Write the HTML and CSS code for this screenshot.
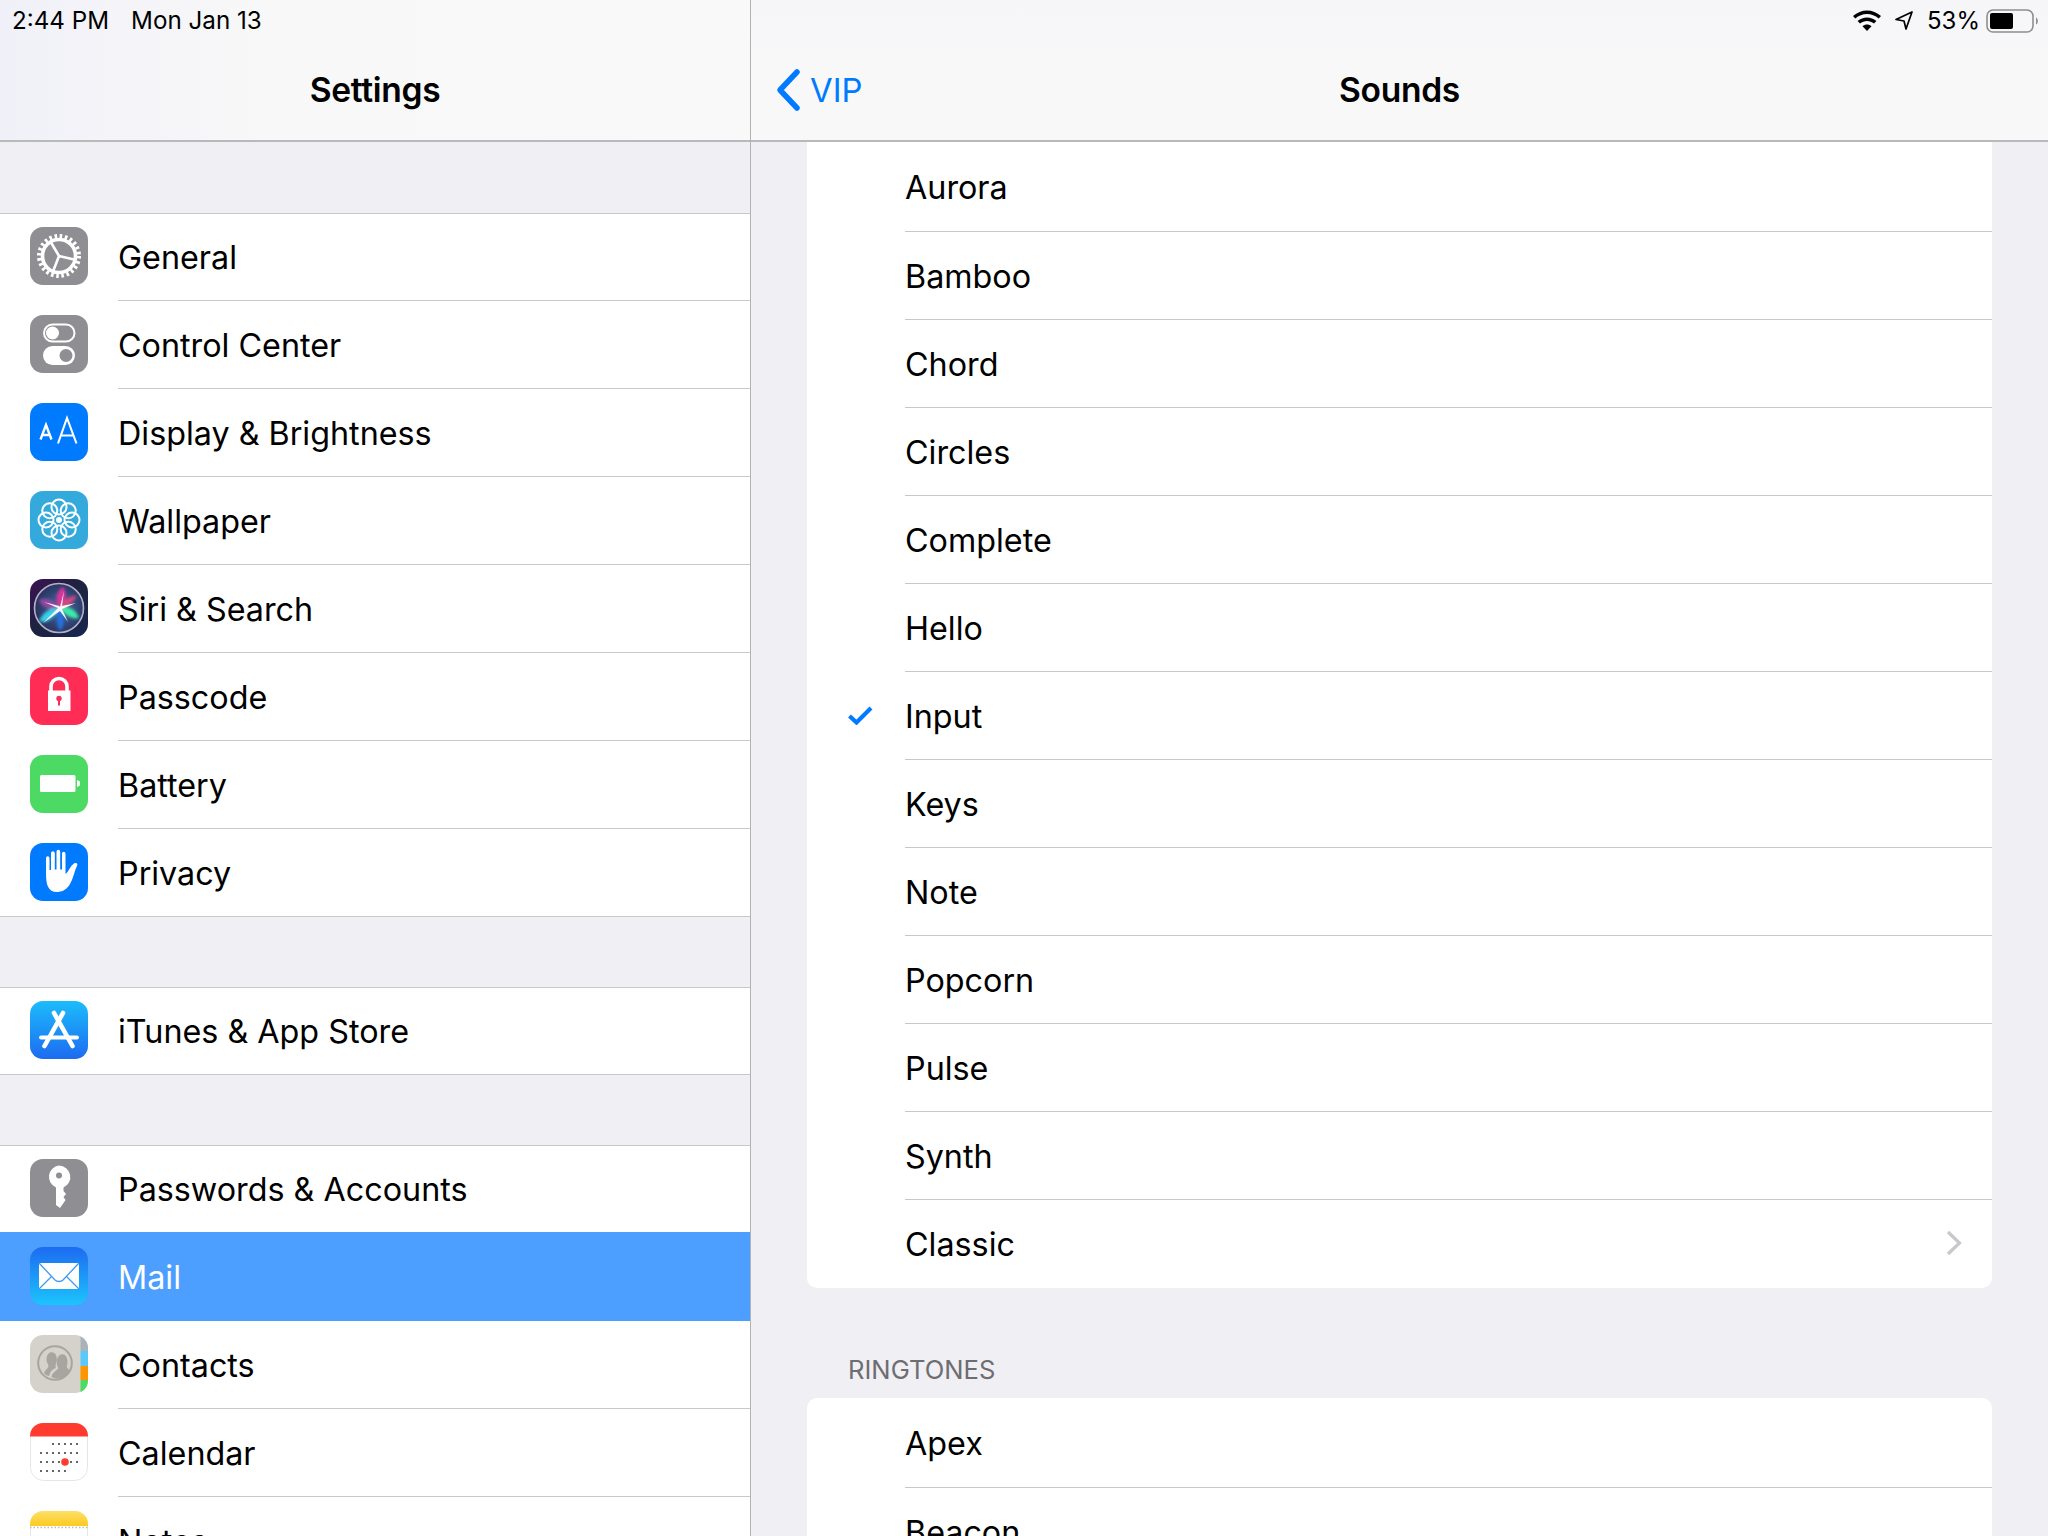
FILE: index.html
```html
<!DOCTYPE html>
<html lang="en">
<head>
<meta charset="utf-8">
<title>Settings</title>
<link rel="stylesheet" href="styles.css">
</head>
<body>
<svg class="defs" width="0" height="0" aria-hidden="true">
  <defs>
    <linearGradient id="gStore" x1="0" y1="0" x2="0" y2="1"><stop offset="0" stop-color="#1cbcfb"/><stop offset="1" stop-color="#1d6bf1"/></linearGradient>
    <linearGradient id="gMail" x1="0" y1="0" x2="0" y2="1"><stop offset="0" stop-color="#1d6bf1"/><stop offset="1" stop-color="#1cc4fd"/></linearGradient>
    <linearGradient id="gSiri" x1="0" y1="0" x2="1" y2="1"><stop offset="0" stop-color="#3a1252"/><stop offset=".5" stop-color="#1c2340"/><stop offset="1" stop-color="#17264f"/></linearGradient>
    <radialGradient id="gOrb" cx=".55" cy=".5" r=".55"><stop offset="0" stop-color="#4f6ea6"/><stop offset=".7" stop-color="#2e4272"/><stop offset="1" stop-color="#2a3159"/></radialGradient>
    <linearGradient id="gNotes" x1="0" y1="0" x2="0" y2="1"><stop offset="0" stop-color="#fde069"/><stop offset="1" stop-color="#fccb1f"/></linearGradient>
    <filter id="fSoft" x="-20%" y="-20%" width="140%" height="140%"><feGaussianBlur stdDeviation="1.600"/></filter>
  </defs>
</svg>
<main class="ipad">
  <section class="master">
    <header class="nav nav-master">
      <div class="status">
        <span class="status-time">2:44 PM</span>
        <span class="status-date">Mon Jan 13</span>
      </div>
      <h1 class="nav-title">Settings</h1>
    </header>

    <div class="group group-first">
      <div class="set-row">
        <svg class="icon" viewBox="0 0 58 58"><rect width="58" height="58" rx="13" fill="#8e8e93"/><circle cx="29" cy="29" r="20" fill="none" stroke="#fff" stroke-width="4" stroke-dasharray="2.620 2.620"/><circle cx="29" cy="29" r="16.500" fill="none" stroke="#fff" stroke-width="3.600"/><path d="M29 29 21 15.500M29 29 44 32.500M29 29 23 44.500" stroke="#fff" stroke-width="2.600" fill="none"/></svg>
        <div class="set-label">General</div>
      </div>
      <div class="set-row">
        <svg class="icon" viewBox="0 0 58 58"><rect width="58" height="58" rx="13" fill="#8e8e93"/><rect x="14" y="9.500" width="30.500" height="17" rx="8.500" fill="none" stroke="#fff" stroke-width="2"/><circle cx="22.500" cy="18" r="6.500" fill="#fff"/><rect x="13" y="31" width="32" height="19" rx="9.500" fill="#fff"/><circle cx="36" cy="40.500" r="6.500" fill="#8e8e93"/></svg>
        <div class="set-label">Control Center</div>
      </div>
      <div class="set-row">
        <svg class="icon" viewBox="0 0 58 58"><rect width="58" height="58" rx="13" fill="#007aff"/><path d="M10.500 36.500 16 22 21.500 36.500M12.300 32H19.700" fill="none" stroke="#fff" stroke-width="2.400"/><path d="M28 40.500 37 15 46.500 40.500M31 32.500H43" fill="none" stroke="#fff" stroke-width="2.100"/></svg>
        <div class="set-label">Display &amp; Brightness</div>
      </div>
      <div class="set-row">
        <svg class="icon" viewBox="0 0 58 58"><rect width="58" height="58" rx="13" fill="#34aadc"/><g fill="none" stroke="#fff" stroke-width="2"><circle cx="29" cy="16" r="7.500"/><circle cx="29" cy="42" r="7.500"/><circle cx="16" cy="29" r="7.500"/><circle cx="42" cy="29" r="7.500"/><circle cx="19.800" cy="19.800" r="7.500"/><circle cx="38.200" cy="19.800" r="7.500"/><circle cx="19.800" cy="38.200" r="7.500"/><circle cx="38.200" cy="38.200" r="7.500"/></g><circle cx="29" cy="29" r="3" fill="#fff"/></svg>
        <div class="set-label">Wallpaper</div>
      </div>
      <div class="set-row">
        <svg class="icon" viewBox="0 0 58 58"><rect width="58" height="58" rx="13" fill="url(#gSiri)"/><circle cx="29" cy="29" r="24.500" fill="url(#gOrb)" stroke="#b5b0c6" stroke-width="1.600"/><g filter="url(#fSoft)"><path d="M33 8C38 14 36 24 30 29 24 22 26 12 33 8Z" fill="#d9349a"/><path d="M9 21C17 17 25 22 29 29 20 32 12 29 9 21Z" fill="#8f4a9e"/><path d="M9 42C13 33 22 28 29 29 26 37 17 46 9 42Z" fill="#39d0ea"/><path d="M30 52C26 45 26 36 29 29 34 35 36 45 30 52Z" fill="#2472e0"/><path d="M49 39C42 41 34 35 29 29 37 26 46 30 49 39Z" fill="#3ceca8"/><path d="M47 17C43 24 36 29 29 29 31 23 39 16 47 17Z" fill="#d8457f"/></g><path d="M30 28 34 12 32 27 46 24 32 30 38 43 30 32 13 44 28 29 14 23 29 27Z" fill="#fff" opacity=".95"/></svg>
        <div class="set-label">Siri &amp; Search</div>
      </div>
      <div class="set-row">
        <svg class="icon" viewBox="0 0 58 58"><rect width="58" height="58" rx="13" fill="#ff2d55"/><path d="M21 24V19.500A8 8 0 0 1 37 19.500V24" fill="none" stroke="#fff" stroke-width="3.600"/><rect x="18" y="23.500" width="22.500" height="20.500" fill="#fff"/><circle cx="29" cy="31.500" r="2.700" fill="#ff2d55"/><rect x="28" y="32" width="2" height="6.500" fill="#ff2d55"/></svg>
        <div class="set-label">Passcode</div>
      </div>
      <div class="set-row">
        <svg class="icon" viewBox="0 0 58 58"><rect width="58" height="58" rx="13" fill="#4cd964"/><rect x="10" y="20" width="35.500" height="17" rx="1.500" fill="#fff"/><path d="M47 25 50 26.500V30.500L47 32Z" fill="#fff"/></svg>
        <div class="set-label">Battery</div>
      </div>
      <div class="set-row set-row-last">
        <svg class="icon" viewBox="0 0 58 58"><rect width="58" height="58" rx="13" fill="#007aff"/><path d="M16 30V15.500C16 12.500 19.500 12.500 19.500 15.500V27H21V10.500C21 7.500 24.800 7.500 24.800 10.500V26.500H26.500V9C26.500 6 30.200 6 30.200 9V26.500H32V11C32 8 35.500 8 35.500 11V31C38 30 40 23 44 20.500 47 19 48 21.500 47 23 43 30 42.500 48 28 49 18 49.500 16 42 16 30Z" fill="#fff"/></svg>
        <div class="set-label">Privacy</div>
      </div>
    </div>

    <div class="group">
      <div class="set-row set-row-last">
        <svg class="icon" viewBox="0 0 58 58"><rect width="58" height="58" rx="13" fill="url(#gStore)"/><g stroke="#fff" stroke-width="4.600" stroke-linecap="round" fill="none"><path d="M24 12 42.500 45"/><path d="M33 12 14.500 45"/><path d="M11 36.500H47" stroke-width="3.800"/></g></svg>
        <div class="set-label">iTunes &amp; App Store</div>
      </div>
    </div>

    <div class="group">
      <div class="set-row set-row-last">
        <svg class="icon" viewBox="0 0 58 58"><rect width="58" height="58" rx="13" fill="#8e8e93"/><path d="M29 6.500A11.500 11.500 0 0 1 33.500 28.500V32L36 35 33.500 38 35.500 41 33.500 44 30 49 26 46V28.500A11.500 11.500 0 0 1 29 6.500Z" fill="#fff"/><circle cx="29" cy="16.500" r="3" fill="#8e8e93"/></svg>
        <div class="set-label">Passwords &amp; Accounts</div>
      </div>
      <div class="set-row set-row-selected">
        <svg class="icon" viewBox="0 0 58 58"><rect width="58" height="58" rx="13" fill="url(#gMail)"/><rect x="9" y="16" width="40" height="26" fill="#fff"/><path d="M9 16 25 33C27 35 31 35 33 33L49 16M9 42 22 29M49 42 36 29" fill="none" stroke="#3f9bf1" stroke-width="1.300"/></svg>
        <div class="set-label">Mail</div>
      </div>
      <div class="set-row">
        <svg class="icon" viewBox="0 0 58 58"><rect width="58" height="58" rx="13" fill="#d5d2cb"/><path d="M50.500 1.500C55 3.500 58 8 58 13V16H50.500Z" fill="#a9b4b8"/><rect x="50.500" y="16" width="7.500" height="15" fill="#5ac8fa"/><rect x="50.500" y="31" width="7.500" height="14" fill="#ff9500"/><path d="M50.500 45H58C58 51 55 55 50.500 57Z" fill="#4cd964"/><g transform="translate(25 28) scale(.84) translate(-26 -29)"><circle cx="26" cy="29" r="20" fill="none" stroke="#a8a5a0" stroke-width="2.400"/><path d="M13 41C14 36 19 36 18 31 15 27 15 19 20 16.500 26 15 29 20 28 27 27 31 26 32 27 35 21 37 20 41 19 44.500 16 44 14 43 13 41Z" fill="#a8a5a0"/><path d="M22 46C22 40 29 38 30 35 27 31 27 20 34 18.500 41 18 42 28 40 33 40 36 44 37 44 40 40 45 34 47.500 30 47.500 27 47.500 25 47 22 46Z" fill="#a8a5a0"/></g></svg>
        <div class="set-label">Contacts</div>
      </div>
      <div class="set-row">
        <svg class="icon" viewBox="0 0 58 58"><rect x=".5" y=".5" width="57" height="57" rx="13" fill="#fff" stroke="#e6e6e6"/><path d="M0 13A13 13 0 0 1 13 0H45A13 13 0 0 1 58 13V13.500H0Z" fill="#ff3b30"/><g fill="#333"><circle cx="23" cy="21" r="1"/><circle cx="29" cy="21" r="1"/><circle cx="35" cy="21" r="1"/><circle cx="41" cy="21" r="1"/><circle cx="47" cy="21" r="1"/><circle cx="11" cy="30" r="1"/><circle cx="17" cy="30" r="1"/><circle cx="23" cy="30" r="1"/><circle cx="29" cy="30" r="1"/><circle cx="35" cy="30" r="1"/><circle cx="41" cy="30" r="1"/><circle cx="47" cy="30" r="1"/><circle cx="11" cy="39" r="1"/><circle cx="17" cy="39" r="1"/><circle cx="23" cy="39" r="1"/><circle cx="29" cy="39" r="1"/><circle cx="41" cy="39" r="1"/><circle cx="47" cy="39" r="1"/><circle cx="11" cy="48" r="1"/><circle cx="17" cy="48" r="1"/><circle cx="23" cy="48" r="1"/><circle cx="29" cy="48" r="1"/><circle cx="35" cy="48" r="1"/></g><circle cx="35" cy="39" r="3.800" fill="#ff3b30"/></svg>
        <div class="set-label">Calendar</div>
      </div>
      <div class="set-row">
        <svg class="icon" viewBox="0 0 58 58"><rect x=".5" y=".5" width="57" height="57" rx="13" fill="#fff" stroke="#e6e6e6"/><path d="M0 13A13 13 0 0 1 13 0H45A13 13 0 0 1 58 13V15H0Z" fill="url(#gNotes)"/><path d="M0 16.500H58" stroke="#bbb" stroke-width="1.400" stroke-dasharray="1.500 2"/></svg>
        <div class="set-label">Notes</div>
      </div>
    </div>
  </section>

  <section class="detail">
    <header class="nav nav-detail">
      <div class="status status-right">
        <svg class="wifi" viewBox="0 0 28 21"><path d="M14 21 9.500 16.200C12 13.900 16 13.900 18.500 16.200Z" fill="#000"/><path d="M7 13.600C11 10 17 10 21 13.600L23.400 11C18 6.200 10 6.200 4.600 11Z" fill="#000"/><path d="M2.300 8.500C9 2.500 19 2.500 25.700 8.500L28 6C20 -1.500 8 -1.500 0 6Z" fill="#000"/></svg>
        <svg class="arrow" viewBox="0 0 18 19"><path d="M1 8.500 17 1 11 18 9 10Z" fill="none" stroke="#000" stroke-width="1.700" stroke-linejoin="round"/></svg>
        <span class="status-pct">53%</span>
        <svg class="batt" viewBox="0 0 54 24"><rect x="1" y="1" width="46" height="22" rx="6" fill="none" stroke="#8e8e8e" stroke-width="1.600"/><rect x="4" y="4" width="23" height="16" rx="2" fill="#000"/><path d="M50 8.500C52.500 9.500 52.500 14.500 50 15.500Z" fill="#8e8e8e"/></svg>
      </div>
      <div class="back">
        <svg class="back-chevron" viewBox="0 0 28 44"><path d="M23 4 6 22 23 40" fill="none" stroke="#007aff" stroke-width="5.500" stroke-linecap="round" stroke-linejoin="round"/></svg>
        <span class="back-text">VIP</span>
      </div>
      <h2 class="nav-title">Sounds</h2>
    </header>

    <div class="detail-body">
      <div class="card card-scrolled">
        <div class="tone tone-first"><span class="tone-mark"></span><div class="tone-label">Aurora</div></div>
        <div class="tone"><span class="tone-mark"></span><div class="tone-label">Bamboo</div></div>
        <div class="tone"><span class="tone-mark"></span><div class="tone-label">Chord</div></div>
        <div class="tone"><span class="tone-mark"></span><div class="tone-label">Circles</div></div>
        <div class="tone"><span class="tone-mark"></span><div class="tone-label">Complete</div></div>
        <div class="tone"><span class="tone-mark"></span><div class="tone-label">Hello</div></div>
        <div class="tone">
          <span class="tone-mark"><svg class="check" viewBox="0 0 26 20"><path d="M2.500 11 9.500 17.500 24 3" fill="none" stroke="#007aff" stroke-width="4.200"/></svg></span>
          <div class="tone-label">Input</div>
        </div>
        <div class="tone"><span class="tone-mark"></span><div class="tone-label">Keys</div></div>
        <div class="tone"><span class="tone-mark"></span><div class="tone-label">Note</div></div>
        <div class="tone"><span class="tone-mark"></span><div class="tone-label">Popcorn</div></div>
        <div class="tone"><span class="tone-mark"></span><div class="tone-label">Pulse</div></div>
        <div class="tone"><span class="tone-mark"></span><div class="tone-label">Synth</div></div>
        <div class="tone tone-last">
          <span class="tone-mark"></span>
          <div class="tone-label">Classic
            <svg class="chevron" viewBox="0 0 16 26"><path d="M2 2 13.500 13 2 24" fill="none" stroke="#c7c7cc" stroke-width="3.200"/></svg>
          </div>
        </div>
      </div>
      <h3 class="section-head">RINGTONES</h3>
      <div class="card">
        <div class="tone tone-first"><span class="tone-mark"></span><div class="tone-label">Apex</div></div>
        <div class="tone tone-last"><span class="tone-mark"></span><div class="tone-label">Beacon</div></div>
      </div>
    </div>
  </section>
</main>
</body>
</html>
```
FILE: styles.css
```css
* { box-sizing: border-box; }
html, body { margin: 0; padding: 0; height: 100%; }
body { width: 2048px; height: 1536px; overflow: hidden; background: #efeff4; font-family: Inter, "Liberation Sans", sans-serif; color: #000; }
.defs { position: absolute; }
.ipad { display: flex; width: 2048px; height: 1536px; overflow: hidden; }

.master { flex: none; width: 751px; height: 1536px; border-right: 1px solid #b2b2b2; overflow: hidden; background: #efeff4; }
.detail { flex: 1; height: 1536px; overflow: hidden; background: #efeff4; }

.nav { position: relative; height: 142px; border-bottom: 2px solid #b9b9bb; }
.nav-master { background: linear-gradient(90deg, #f0f0f8 0, #f3f3f9 80px, #f8f8f8 260px, #f9f9f9 100%); }
.nav-detail { background: linear-gradient(180deg, #f6f6f9 0, #f8f8f9 60px, #f8f8f8 100%); }
.nav-title { position: absolute; left: 0; right: 0; top: 68px; margin: 0; text-align: center; font-size: 33.600px; line-height: 44px; font-weight: 600; letter-spacing: -.3px; }

.status { display: flex; align-items: center; height: 41px; font-size: 24.200px; padding-left: 12px; }
.status-date { margin-left: 22px; }
.status-right { justify-content: flex-end; padding: 0 8px 0 0; }
.wifi { width: 28px; height: 21px; margin-right: 14px; }
.arrow { width: 18px; height: 19px; margin-right: 14px; }
.status-pct { margin-right: 6px; font-size: 24px; }
.batt { width: 54px; height: 24px; }

.back { position: absolute; left: 23px; top: 68px; display: flex; align-items: center; height: 44px; z-index: 1; }
.back-chevron { width: 28px; height: 44px; }
.back-text { margin-left: 8px; font-size: 32.800px; color: #007aff; }

.group { margin-top: 70px; background: #fff; box-shadow: inset 0 1px 0 #c8c7cc; }
.group-first { margin-top: 71px; }
.set-row { display: flex; align-items: center; height: 88px; padding-left: 30px; }
.set-label { display: flex; align-items: center; flex: 1; align-self: stretch; margin-left: 30px; padding-top: 1px; font-size: 32.300px; border-bottom: 1px solid #c8c7cc; }
.icon { flex: none; width: 58px; height: 58px; margin-bottom: 2px; }
.set-row-last { border-bottom: 1px solid #c8c7cc; }
.set-row-last .set-label { border-bottom: 0; }
.set-row-selected { height: 89px; margin-top: -1px; position: relative; background: #4c9eff; color: #fff; }
.set-row-selected .set-label { border-bottom: 0; }
.set-row-selected .icon { margin-bottom: 1px; }

.detail-body { padding: 0 56px 0 56px; }
.card { background: #fff; border-radius: 10px; overflow: hidden; }
.card-scrolled { border-top-left-radius: 0; border-top-right-radius: 0; }
.tone { display: flex; height: 88px; }
.tone-first { height: 90px; }
.tone-mark { flex: none; display: flex; align-items: center; justify-content: flex-start; width: 98px; padding-left: 40px; }
.tone-label { display: flex; align-items: center; justify-content: space-between; flex: 1; padding-top: 2px; padding-right: 30px; font-size: 32.300px; border-bottom: 1px solid #c8c7cc; }
.tone-last .tone-label { border-bottom: 0; padding-top: 0; }
.check { width: 26px; height: 20px; margin-bottom: 2px; }
.chevron { width: 16px; height: 26px; margin-bottom: 2px; }
.section-head { margin: 0; padding: 69px 0 15px 41px; height: 110px; font-size: 25.600px; line-height: 26px; font-weight: 400; color: #6d6d72; }
```
